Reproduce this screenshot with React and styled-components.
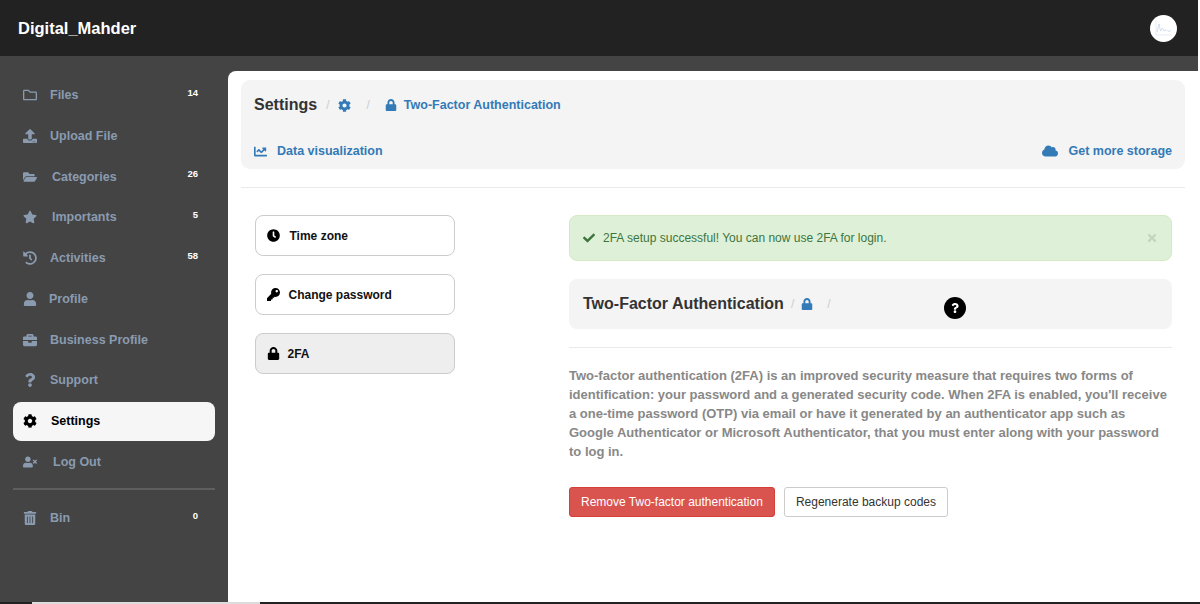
import React from 'react';
import styled, { createGlobalStyle } from 'styled-components';
import {
  FaRegFolder,
  FaUpload,
  FaFolderOpen,
  FaStar,
  FaHistory,
  FaUser,
  FaBriefcase,
  FaCog,
  FaUserTimes,
  FaTrashAlt,
  FaLock,
  FaChartLine,
  FaCloud,
  FaClock,
  FaKey,
  FaCheck,
  FaTimes,
  FaQuestion
} from 'react-icons/fa';

const GlobalStyle = createGlobalStyle`
  html, body {
    margin: 0;
    padding: 0;
    background: #fff;
    font-family: "Liberation Sans", Arial, sans-serif;
  }
`;

const Frame = styled.div`
  width: 1200px;
  height: 604px;
  display: flex;
  flex-direction: column;
  overflow: hidden;
`;

const Shell = styled.div`
  flex: 1;
  min-height: 0;
  display: flex;
  flex-direction: column;
  padding-right: 2px;
`;

const TopBar = styled.header`
  height: 56px;
  flex-shrink: 0;
  background: #222;
  display: flex;
  align-items: center;
  justify-content: space-between;
  padding: 0 21px 0 18px;
`;

const Brand = styled.div`
  color: #fff;
  font-size: 16.5px;
  font-weight: 700;
`;

const Avatar = styled.div`
  width: 27px;
  height: 27px;
  border-radius: 50%;
  background: #fff;
  display: flex;
  align-items: center;
  justify-content: center;
`;

const Body = styled.div`
  flex: 1;
  min-height: 0;
  display: flex;
  background: #444;
`;

const Sidebar = styled.nav`
  width: 228px;
  flex-shrink: 0;
  box-sizing: border-box;
  padding: 19.5px 13px 0;
  display: flex;
  flex-direction: column;
  gap: 1.75px;
`;

const NavItem = styled.div`
  height: 39px;
  flex-shrink: 0;
  box-sizing: border-box;
  display: flex;
  align-items: center;
  padding: 0 17px 0 10px;
  border-radius: 8px;
  font-size: 12.5px;
  font-weight: 700;
  color: ${props => (props.$active ? '#000' : '#8a9bb0')};
  background: ${props => (props.$active ? '#f6f6f6' : 'transparent')};
`;

const NavIcon = styled.span`
  width: ${props => props.$slot || 27}px;
  flex-shrink: 0;
  display: flex;
  align-items: center;
  font-size: 14px;
`;

const Badge = styled.span`
  margin-left: auto;
  margin-top: -6px;
  color: #fff;
  font-size: 9.5px;
  font-weight: 700;
`;

const SideRule = styled.hr`
  width: 100%;
  height: 2px;
  flex-shrink: 0;
  border: 0;
  margin: 5px 0 7px;
  background: #5e5e5e;
`;

const Main = styled.main`
  flex: 1;
  min-width: 0;
  margin-top: 15px;
  box-sizing: border-box;
  padding: 9px 13px 0;
  background: #fff;
  border-top-left-radius: 8px;
`;

const PageHead = styled.div`
  height: 89px;
  box-sizing: border-box;
  padding: 14px 13px 0;
  background: #f4f4f4;
  border-radius: 9px;
  display: flex;
  flex-direction: column;
  justify-content: space-between;
  padding-bottom: 10px;
`;

const Crumbs = styled.div`
  display: flex;
  align-items: center;
  height: 22px;
`;

const PageTitle = styled.h1`
  margin: 0;
  font-size: 16px;
  font-weight: 700;
  color: #333;
`;

const Slash = styled.span`
  color: #ccc;
  font-size: 12px;
  margin: 0 ${props => props.$space || 9}px;
`;

const BlueLink = styled.span`
  display: inline-flex;
  align-items: center;
  color: #337ab7;
  font-size: 12.5px;
  font-weight: 700;
`;

const LinkIcon = styled.span`
  display: inline-flex;
  color: #337ab7;
  font-size: ${props => props.$size || 13}px;
  margin-right: ${props => props.$gap || 0}px;
`;

const HeadLinks = styled.div`
  display: flex;
  justify-content: space-between;
  align-items: center;
`;

const Rule = styled.hr`
  border: 0;
  height: 1px;
  background: #e9e9e9;
  margin: ${props => props.$margin || '18px 0 0'};
`;

const Columns = styled.div`
  display: flex;
  padding: 27px 13px 0 13.5px;
`;

const SubNav = styled.div`
  width: 200.5px;
  flex-shrink: 0;
  margin-right: 114px;
  display: flex;
  flex-direction: column;
  gap: 18px;
`;

const SubNavItem = styled.div`
  height: 41px;
  box-sizing: border-box;
  display: flex;
  align-items: center;
  padding-left: 11px;
  border: 1px solid #ccc;
  border-radius: 8px;
  font-size: 12px;
  font-weight: 700;
  color: #111;
  background: ${props => (props.$active ? '#eee' : '#fff')};
`;

const SubNavIcon = styled.span`
  width: ${props => props.$slot}px;
  flex-shrink: 0;
  display: flex;
  font-size: 13px;
  color: #000;
`;

const Content = styled.section`
  flex: 1;
  min-width: 0;
`;

const Alert = styled.div`
  height: 46px;
  box-sizing: border-box;
  display: flex;
  align-items: center;
  padding: 0 13px 0 13px;
  background: #dff0d8;
  border: 1px solid #d6e9c6;
  border-radius: 8px;
  color: #3c763d;
  font-size: 12px;
`;

const AlertIcon = styled.span`
  width: 20px;
  display: flex;
  font-size: 12px;
`;

const AlertClose = styled.span`
  margin-left: auto;
  display: flex;
  color: #c3d6bc;
  font-size: 12px;
`;

const SectionHead = styled.div`
  margin-top: 17.5px;
  height: 50px;
  box-sizing: border-box;
  padding-left: 14px;
  background: #f4f4f4;
  border-radius: 8px;
  display: flex;
  align-items: center;
  position: relative;
`;

const SectionTitle = styled.h2`
  margin: 0;
  font-size: 16px;
  font-weight: 700;
  color: #333;
`;

const HelpDot = styled.span`
  position: absolute;
  left: 375px;
  top: 18px;
  width: 22px;
  height: 22px;
  border-radius: 50%;
  background: #000;
  color: #fff;
  font-size: 10px;
  display: flex;
  align-items: center;
  justify-content: center;
`;

const Intro = styled.p`
  margin: 18px 0 0;
  font-size: 13px;
  line-height: 19px;
  font-weight: 700;
  color: #888;
`;

const Actions = styled.div`
  display: flex;
  gap: 8.5px;
  margin-top: 26.5px;
  margin-left: -0.5px;
`;

const Button = styled.button`
  height: 30px;
  box-sizing: border-box;
  padding: 0 ${props => (props.$danger ? 11.5 : 11)}px;
  border-radius: 3px;
  border: 1px solid ${props => (props.$danger ? '#d43f3a' : '#ccc')};
  background: ${props => (props.$danger ? '#d9534f' : '#fff')};
  color: ${props => (props.$danger ? '#fff' : '#333')};
  font-family: inherit;
  font-size: 12px;
`;

const TaskStrip = styled.div`
  height: 2px;
  flex-shrink: 0;
  display: flex;
  background: #222;
`;

const TaskTab = styled.span`
  width: 228px;
  margin-left: 32px;
  background: #ddd;
`;

const navItems = [
  { label: 'Files', icon: FaRegFolder, badge: 14 },
  { label: 'Upload File', icon: FaUpload },
  { label: 'Categories', icon: FaFolderOpen, badge: 26, slot: 29 },
  { label: 'Importants', icon: FaStar, badge: 5, slot: 29 },
  { label: 'Activities', icon: FaHistory, badge: 58 },
  { label: 'Profile', icon: FaUser, slot: 26 },
  { label: 'Business Profile', icon: FaBriefcase },
  { label: 'Support', icon: FaQuestion },
  { label: 'Settings', icon: FaCog, active: true, slot: 28 },
  { label: 'Log Out', icon: FaUserTimes, slot: 30 }
];

const subNavItems = [
  { label: 'Time zone', icon: FaClock, slot: 23 },
  { label: 'Change password', icon: FaKey, slot: 22 },
  { label: '2FA', icon: FaLock, slot: 21, active: true }
];

const renderNavItem = ({ label, icon: Icon, badge, slot, active }) => (
  <NavItem key={label} $active={active}>
    <NavIcon $slot={slot}>
      <Icon />
    </NavIcon>
    {label}
    {badge !== undefined && <Badge>{badge}</Badge>}
  </NavItem>
);

const App = () => (
  <>
    <GlobalStyle />
    <Frame>
      <Shell>
        <TopBar>
          <Brand>Digital_Mahder</Brand>
          <Avatar>
            <svg width="20" height="20" viewBox="0 0 20 20" fill="none">
              <path d="M2 2v15h16" stroke="#dfe6f2" strokeWidth="0.8" />
              <path d="M3 14l2-8 1.5 7 2-3 1.5 3 2-1.5 2 2 3-1" stroke="#c5d5ee" strokeWidth="0.8" />
            </svg>
          </Avatar>
        </TopBar>
        <Body>
          <Sidebar>
            {navItems.map(renderNavItem)}
            <SideRule />
            {renderNavItem({ label: 'Bin', icon: FaTrashAlt, badge: 0 })}
          </Sidebar>
          <Main>
            <PageHead>
              <Crumbs>
                <PageTitle>Settings</PageTitle>
                <Slash>/</Slash>
                <LinkIcon $size={13}><FaCog /></LinkIcon>
                <Slash $space={15}>/</Slash>
                <BlueLink>
                  <LinkIcon $size={12} $gap={7}><FaLock /></LinkIcon>
                  Two-Factor Authentication
                </BlueLink>
              </Crumbs>
              <HeadLinks>
                <BlueLink>
                  <LinkIcon $size={13} $gap={10}><FaChartLine /></LinkIcon>
                  Data visualization
                </BlueLink>
                <BlueLink>
                  <LinkIcon $size={16} $gap={10}><FaCloud /></LinkIcon>
                  Get more storage
                </BlueLink>
              </HeadLinks>
            </PageHead>
            <Rule />
            <Columns>
              <SubNav>
                {subNavItems.map(({ label, icon: Icon, slot, active }) => (
                  <SubNavItem key={label} $active={active}>
                    <SubNavIcon $slot={slot}>
                      <Icon />
                    </SubNavIcon>
                    {label}
                  </SubNavItem>
                ))}
              </SubNav>
              <Content>
                <Alert>
                  <AlertIcon><FaCheck /></AlertIcon>
                  2FA setup successful! You can now use 2FA for login.
                  <AlertClose><FaTimes /></AlertClose>
                </Alert>
                <SectionHead>
                  <SectionTitle>Two-Factor Authentication</SectionTitle>
                  <Slash $space={7}>/</Slash>
                  <LinkIcon $size={12}><FaLock /></LinkIcon>
                  <Slash $space={14}>/</Slash>
                  <HelpDot><FaQuestion /></HelpDot>
                </SectionHead>
                <Rule $margin="18px 0 0" />
                <Intro>
                  Two-factor authentication (2FA) is an improved security measure that requires two forms of
                  identification: your password and a generated security code. When 2FA is enabled, you'll
                  receive a one-time password (OTP) via email or have it generated by an authenticator app such
                  as Google Authenticator or Microsoft Authenticator, that you must enter along with your
                  password to log in.
                </Intro>
                <Actions>
                  <Button $danger>Remove Two-factor authentication</Button>
                  <Button>Regenerate backup codes</Button>
                </Actions>
              </Content>
            </Columns>
          </Main>
        </Body>
      </Shell>
      <TaskStrip>
        <TaskTab />
      </TaskStrip>
    </Frame>
  </>
);

export default App;
